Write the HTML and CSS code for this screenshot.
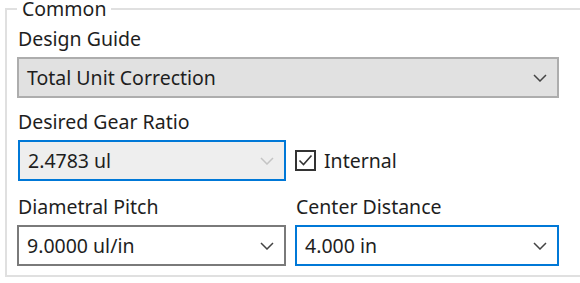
FILE: index.html
```html
<!DOCTYPE html>
<html lang="en">
<head>
    <meta charset="UTF-8">
    <title>Common</title>
    <link rel="stylesheet" href="styles.css">
</head>
<body>
    <fieldset class="group">
        <legend>Common</legend>
        <div class="grid">
            <div class="field wide">
                <div class="label">Design Guide</div>
                <div class="combo disabled">
                    <span>Total Unit Correction</span>
                    <svg class="chev" width="14" height="8" viewBox="0 0 14 8"><path d="M1 1 L7 7 L13 1" fill="none" stroke="#444" stroke-width="1.5"/></svg>
                </div>
            </div>
            <div class="field">
                <div class="label">Desired Gear Ratio</div>
                <div class="combo readonly">
                    <span>2.4783 ul</span>
                    <svg class="chev" width="14" height="8" viewBox="0 0 14 8"><path d="M1 1 L7 7 L13 1" fill="none" stroke="#c4c4c4" stroke-width="1.5"/></svg>
                </div>
            </div>
            <div class="field bottom">
                <label class="check">
                    <span class="box">
                        <svg width="17" height="17" viewBox="0 0 17 17"><path d="M2.5 8.5 L6.5 12.5 L14.5 3.5" fill="none" stroke="#333" stroke-width="1.6"/></svg>
                    </span>
                    Internal
                </label>
            </div>
            <div class="field last">
                <div class="label">Diametral Pitch</div>
                <div class="combo">
                    <span>9.0000 ul/in</span>
                    <svg class="chev" width="14" height="8" viewBox="0 0 14 8"><path d="M1 1 L7 7 L13 1" fill="none" stroke="#444" stroke-width="1.5"/></svg>
                </div>
            </div>
            <div class="field last">
                <div class="label">Center Distance</div>
                <div class="combo focus">
                    <span>4.000 in</span>
                    <svg class="chev" width="14" height="8" viewBox="0 0 14 8"><path d="M1 1 L7 7 L13 1" fill="none" stroke="#444" stroke-width="1.5"/></svg>
                </div>
            </div>
        </div>
    </fieldset>
</body>
</html>
```

FILE: styles.css
```css
body {
    margin: 0;
    background-color: #ffffff;
    font-family: "Noto Sans", "Open Sans", sans-serif;
    font-size: 19.5px;
    color: #1e1e1e;
    overflow: hidden;
}
.group {
    box-sizing: border-box;
    margin: 0 0 0 5px;
    width: 575px;
    padding: 0 0 9px 10px;
    border: 2px solid #e0e0e0;
    border-right: none;
}
.group legend {
    padding: 0 5px;
    line-height: 18px;
}
.grid {
    display: grid;
    grid-template-columns: 269px 264px;
    column-gap: 9px;
    width: 542px;
}
.field {
    display: flex;
    flex-direction: column;
}
.wide {
    grid-column: 1 / 3;
}
.bottom {
    justify-content: flex-end;
}
.label {
    line-height: 22px;
    padding: 13px 0 7px 1px;
}
.wide .label {
    padding-top: 10px;
}
.last .label {
    padding-top: 15px;
}
.combo {
    height: 41px;
    box-sizing: border-box;
    border: 2px solid #7a7a7a;
    background: #ffffff;
    display: flex;
    align-items: center;
    justify-content: space-between;
    padding: 0 10px 0 8px;
}
.combo.disabled {
    background: #e1e1e1;
    border-color: #adadad;
}
.combo.readonly {
    background: #eeeeee;
    border-color: #0078d7;
    margin-left: 1px;
}
.combo.focus {
    border-color: #0078d7;
}
.check {
    display: flex;
    align-items: center;
    height: 41px;
    gap: 8px;
}
.box {
    width: 21px;
    height: 21px;
    box-sizing: border-box;
    border: 2px solid #333333;
    display: flex;
    align-items: center;
    justify-content: center;
}
```
